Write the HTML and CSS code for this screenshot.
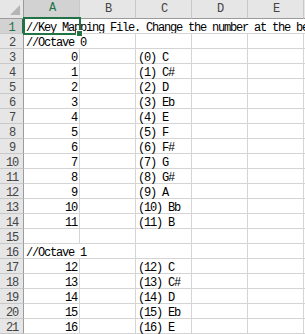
FILE: index.html
```html
<!DOCTYPE html>
<html>
<head>
<meta charset="utf-8">
<link rel="stylesheet" href="styles.css">
</head>
<body>
<div class="sheet">
  <div class="corner"><span class="tri"></span></div>
  <div class="ch sel-h">A</div><div class="ch">B</div><div class="ch">C</div><div class="ch">D</div><div class="ch">E</div><div class="ch"></div>

  <div class="rh sel-r">1</div>
  <div class="c span-all">//Key Mapping File. Change the number at the be</div>
  <div class="selbox"><span class="handle"></span></div>

  <div class="rh">2</div><div class="c span2">//Octave 0</div><div class="c"></div><div class="c"></div><div class="c"></div><div class="c"></div>

  <div class="rh">3</div><div class="c num">0</div><div class="c"></div><div class="c">(0) C</div><div class="c"></div><div class="c"></div><div class="c"></div>
  <div class="rh">4</div><div class="c num">1</div><div class="c"></div><div class="c">(1) C#</div><div class="c"></div><div class="c"></div><div class="c"></div>
  <div class="rh">5</div><div class="c num">2</div><div class="c"></div><div class="c">(2) D</div><div class="c"></div><div class="c"></div><div class="c"></div>
  <div class="rh">6</div><div class="c num">3</div><div class="c"></div><div class="c">(3) Eb</div><div class="c"></div><div class="c"></div><div class="c"></div>
  <div class="rh">7</div><div class="c num">4</div><div class="c"></div><div class="c">(4) E</div><div class="c"></div><div class="c"></div><div class="c"></div>
  <div class="rh">8</div><div class="c num">5</div><div class="c"></div><div class="c">(5) F</div><div class="c"></div><div class="c"></div><div class="c"></div>
  <div class="rh">9</div><div class="c num">6</div><div class="c"></div><div class="c">(6) F#</div><div class="c"></div><div class="c"></div><div class="c"></div>
  <div class="rh">10</div><div class="c num">7</div><div class="c"></div><div class="c">(7) G</div><div class="c"></div><div class="c"></div><div class="c"></div>
  <div class="rh">11</div><div class="c num">8</div><div class="c"></div><div class="c">(8) G#</div><div class="c"></div><div class="c"></div><div class="c"></div>
  <div class="rh">12</div><div class="c num">9</div><div class="c"></div><div class="c">(9) A</div><div class="c"></div><div class="c"></div><div class="c"></div>
  <div class="rh">13</div><div class="c num">10</div><div class="c"></div><div class="c">(10) Bb</div><div class="c"></div><div class="c"></div><div class="c"></div>
  <div class="rh">14</div><div class="c num">11</div><div class="c"></div><div class="c">(11) B</div><div class="c"></div><div class="c"></div><div class="c"></div>
  <div class="rh">15</div><div class="c"></div><div class="c"></div><div class="c"></div><div class="c"></div><div class="c"></div><div class="c"></div>
  <div class="rh">16</div><div class="c span2">//Octave 1</div><div class="c"></div><div class="c"></div><div class="c"></div><div class="c"></div>
  <div class="rh">17</div><div class="c num">12</div><div class="c"></div><div class="c">(12) C</div><div class="c"></div><div class="c"></div><div class="c"></div>
  <div class="rh">18</div><div class="c num">13</div><div class="c"></div><div class="c">(13) C#</div><div class="c"></div><div class="c"></div><div class="c"></div>
  <div class="rh">19</div><div class="c num">14</div><div class="c"></div><div class="c">(14) D</div><div class="c"></div><div class="c"></div><div class="c"></div>
  <div class="rh">20</div><div class="c num">15</div><div class="c"></div><div class="c">(15) Eb</div><div class="c"></div><div class="c"></div><div class="c"></div>
  <div class="rh">21</div><div class="c num">16</div><div class="c"></div><div class="c">(16) E</div><div class="c"></div><div class="c"></div><div class="c"></div>
</div>
</body>
</html>
```

FILE: styles.css
```css
html, body {
  margin: 0;
  padding: 0;
  background: #ffffff;
  overflow: hidden;
}
.sheet {
  display: grid;
  grid-template-columns: 24px repeat(5, 56px) 1px;
  grid-template-rows: 19px repeat(21, 15px);
  font-family: "Liberation Mono", "DejaVu Sans Mono", monospace;
  font-size: 12px;
  letter-spacing: -1.2px;
  color: #000;
  width: 305px;
  height: 334px;
  overflow: hidden;
}
.corner {
  background: #e6e6e6;
  border-right: 1px solid #9b9b9b;
  border-bottom: 1px solid #9b9b9b;
  box-sizing: border-box;
  position: relative;
}
.tri {
  position: absolute;
  right: 3px;
  bottom: 3px;
  width: 0;
  height: 0;
  border-left: 10px solid transparent;
  border-bottom: 10px solid #b5b5b5;
}
.ch {
  background: #e6e6e6;
  color: #444;
  text-align: center;
  border-right: 1px solid #c8c8c8;
  border-bottom: 1px solid #9b9b9b;
  box-sizing: border-box;
  line-height: 18px;
  padding-left: 1px;
}
.ch.sel-h {
  background: #d2d2d2;
  color: #217346;
  border-bottom: 2px solid #217346;
  line-height: 17px;
}
.rh {
  background: #e6e6e6;
  color: #444;
  text-align: center;
  border-right: 1px solid #9b9b9b;
  border-bottom: 1px solid #c8c8c8;
  box-sizing: border-box;
  padding-top: 4px;
  line-height: 10px;
  padding-left: 1px;
}
.rh.sel-r {
  grid-row: 2;
  grid-column: 1;
  background: #d2d2d2;
  color: #217346;
  border-right: 2px solid #217346;
}
.c {
  border-right: 1px solid #d4d4d4;
  border-bottom: 1px solid #d4d4d4;
  box-sizing: border-box;
  padding: 4px 2px 0 2px;
  line-height: 10px;
  white-space: nowrap;
  overflow: visible;
  min-width: 0;
}
.c.num {
  text-align: right;
  padding-right: 2px;
}
.span-all {
  grid-row: 2;
  grid-column: 2 / -1;
  overflow: hidden;
  border-right: 0;
}
.span2 {
  grid-column: 2 / 4;
}
.selbox {
  grid-row: 2;
  grid-column: 2;
  margin: -2px -1px -1px -1px;
  border: 2px solid #217346;
  position: relative;
  z-index: 2;
  pointer-events: none;
}
.handle {
  position: absolute;
  right: -4px;
  bottom: -4px;
  width: 5px;
  height: 5px;
  background: #217346;
  border: 1px solid #fff;
}
```
